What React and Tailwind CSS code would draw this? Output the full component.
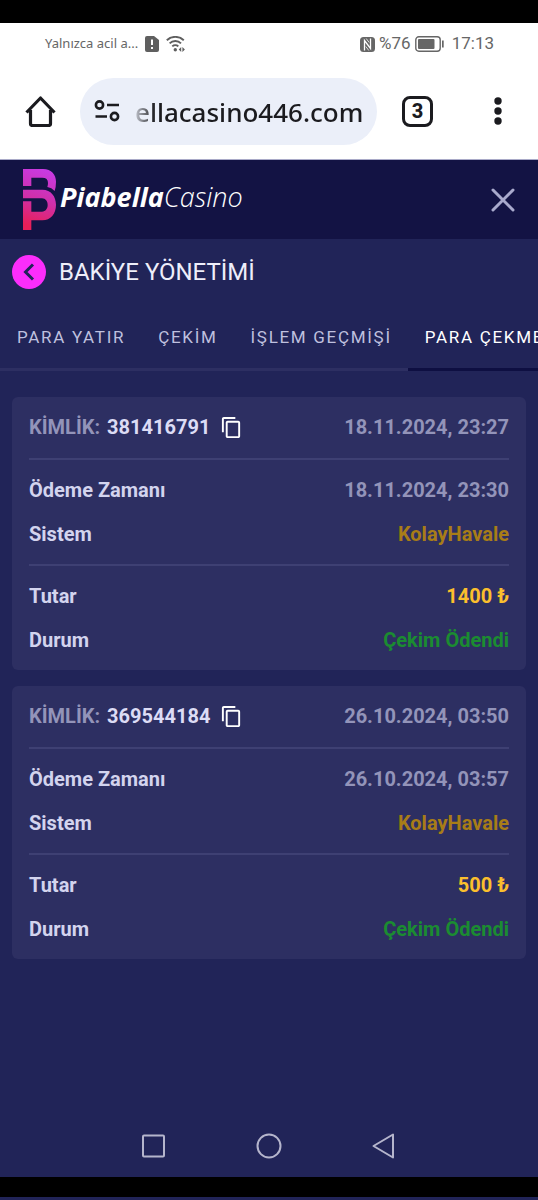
import React from "react";
import { MdContentCopy } from "react-icons/md";

const tabs = ["PARA YATIR", "ÇEKİM", "İŞLEM GEÇMİŞİ", "PARA ÇEKME"];

const withdrawals = [
  { id: "381416791", created: "18.11.2024, 23:27", paid: "18.11.2024, 23:30", system: "KolayHavale", amount: "1400 ₺", status: "Çekim Ödendi" },
  { id: "369544184", created: "26.10.2024, 03:50", paid: "26.10.2024, 03:57", system: "KolayHavale", amount: "500 ₺", status: "Çekim Ödendi" },
];

function StatusBar() {
  return (
    <div className="flex h-[42px] items-center justify-between pl-[45px] pr-11 text-[#666] font-['Noto_Sans',sans-serif]">
      <div className="flex items-center gap-[7px]">
        <span className="text-[13px]">Yalnızca acil a...</span>
        <svg className="h-4 w-[14px]" viewBox="0 0 14 16" aria-hidden="true">
          <path d="M2 0h7l5 4v10a2 2 0 0 1-2 2H2a2 2 0 0 1-2-2V2a2 2 0 0 1 2-2z" fill="#5f5f5f" />
          <path d="M7 3.500v5.500M7 11v2" stroke="#fff" strokeWidth="2" />
        </svg>
        <svg className="h-4 w-5" viewBox="0 0 20 16" fill="none" stroke="#5f5f5f" strokeWidth="1.900" aria-hidden="true">
          <path d="M.8 4.200a12.500 12.500 0 0 1 17 0M3.600 7.400a8 8 0 0 1 11.400 0M6.300 10.400a4.300 4.300 0 0 1 6 0" />
          <circle cx="9.300" cy="13.700" r="1.700" fill="#5f5f5f" stroke="none" />
          <path d="M15.200 11l-2.500 2.500 2.500 2.500zM16.400 11l2.500 2.500-2.500 2.500z" fill="#5f5f5f" stroke="none" />
        </svg>
      </div>
      <div className="flex items-center gap-1 font-['Roboto',sans-serif]">
        <svg className="h-[15px] w-[15px]" viewBox="0 0 15 15" aria-hidden="true">
          <rect width="15" height="15" rx="3.500" fill="#666" />
          <path d="M4.500 13.500V3.500l6 8V1.500" fill="none" stroke="#fff" strokeWidth="1.300" />
          <path d="M6.200 1.500l3 4M5.800 9.500l3 4" fill="none" stroke="#fff" strokeWidth="0.800" />
        </svg>
        <span className="text-[17px]">%76</span>
        <svg className="h-4 w-[29px]" viewBox="0 0 29 16" aria-hidden="true">
          <rect x=".8" y=".8" width="24.400" height="14.400" rx="3" fill="none" stroke="#666" strokeWidth="1.400" />
          <rect x="3" y="3" width="16.500" height="10" rx="1" fill="#666" />
          <rect x="27" y="4.500" width="1.700" height="7" fill="#666" />
        </svg>
        <span className="pl-1 text-[17px]">17:13</span>
      </div>
    </div>
  );
}

function BrowserBar() {
  return (
    <div className="flex h-[95px] items-center border-b border-[#a9aac8] pb-[2px] pl-6 pr-9">
      <button aria-label="Ana sayfa">
        <svg className="h-8 w-8" viewBox="0 0 32 32" fill="none" stroke="#1b1b1f" strokeWidth="3.200" aria-hidden="true">
          <path d="M2.500 17.500L16.500 3l14 14.500M6.500 15v13.500q0 2 2 2h16q2 0 2-2V15" strokeLinejoin="round" />
        </svg>
      </button>
      <div className="ml-6 flex h-[67px] min-w-0 flex-1 items-center rounded-full bg-[#ebeff9] pl-[14px] pr-2">
        <svg className="h-6 w-[26px] shrink-0" viewBox="0 0 26 24" fill="none" stroke="#1b1b1f" strokeWidth="2.600" aria-hidden="true">
          <circle cx="5.500" cy="6" r="3.600" />
          <path d="M13 6h12M1.500 17.500H13" />
          <circle cx="20.500" cy="17.500" r="3.600" />
        </svg>
        <input
          aria-label="Adres"
          defaultValue="ellacasino446.com"
          className="ml-[15px] w-full min-w-0 bg-transparent pt-[3px] text-[26px] font-medium text-[#1b1b1f] outline-none [mask-image:linear-gradient(to_right,rgba(0,0,0,0.2),black_20px)] font-['Noto_Sans',sans-serif]"
        />
      </div>
      <button aria-label="Sekmeler" className="ml-[25px] flex h-[31px] w-[31px] items-center justify-center rounded-lg border-3 border-[#1b1b1f] text-[20px] font-extrabold text-[#1b1b1f]">
        3
      </button>
      <button aria-label="Menü" className="ml-[61px] flex">
        <svg className="h-7 w-2" viewBox="0 0 8 28" fill="#1b1b1f" aria-hidden="true">
          <circle cx="4" cy="4" r="3.700" />
          <circle cx="4" cy="14" r="3.700" />
          <circle cx="4" cy="24" r="3.700" />
        </svg>
      </button>
    </div>
  );
}

function Logo() {
  return (
    <a href="#" className="flex items-center gap-1">
      <svg className="h-[61px] w-[33px]" viewBox="0 0 99 183" fill="none" aria-hidden="true">
        <defs>
          <linearGradient id="mark" gradientUnits="userSpaceOnUse" x1="75" y1="0" x2="20" y2="170">
            <stop offset="0" stopColor="#c83be6" />
            <stop offset="0.550" stopColor="#cf2fa8" />
            <stop offset="1" stopColor="#e81f58" />
          </linearGradient>
        </defs>
        <path d="M0 0H60C86 0 99 18 99 38Q99 54 95 66Q86 56 73 54Q75 48 75 42Q75 26 58 26H25V51H0Z" fill="url(#mark)" />
        <path d="M0 62H58C84 62 99 82 99 107C99 134 83 154 58 154H25V183H0V97H25V128H57C68 128 74 118 74 108C74 97 68 88 57 88H0Z" fill="url(#mark)" />
      </svg>
      <span className="pb-1 text-[27px] italic text-white font-['Open_Sans',sans-serif]">
        <span className="font-bold">Piabella</span>
        <span className="font-light">Casino</span>
      </span>
    </a>
  );
}

function Row({ label, value, tone }) {
  return (
    <div className="flex h-11 items-center justify-between">
      <dt className="text-[#d3d4ee]">{label}</dt>
      <dd className={tone}>{value}</dd>
    </div>
  );
}

function WithdrawalCard({ item }) {
  return (
    <article className="rounded-md bg-[#2d2f62] px-[17px] text-[20px] font-bold">
      <header className="flex items-center justify-between border-b-2 border-[#3e4073] pb-[9px] pt-2">
        <div className="flex h-11 items-center">
          <span className="text-[#9394b9]">KİMLİK:</span>
          <span className="ml-[7px] text-[#dcdcf5]">{item.id}</span>
          <button aria-label="Kimliği kopyala" className="ml-[10px]">
            <MdContentCopy className="h-[23px] w-[23px] text-white" />
          </button>
        </div>
        <time className="text-[#9394b9]">{item.created}</time>
      </header>
      <dl className="border-b-2 border-[#3e4073] py-2">
        <Row label="Ödeme Zamanı" value={item.paid} tone="text-[#9394b9]" />
        <Row label="Sistem" value={item.system} tone="text-[#a87d17]" />
      </dl>
      <dl className="py-2">
        <Row label="Tutar" value={item.amount} tone="text-[#fbbf2d]" />
        <Row label="Durum" value={item.status} tone="text-[#1b8c31]" />
      </dl>
    </article>
  );
}

export default function App() {
  return (
    <div className="flex min-h-screen flex-col bg-[#212458] font-['Roboto',sans-serif]">
      <div className="h-[23px] bg-black" />
      <div className="bg-white">
        <StatusBar />
        <BrowserBar />
      </div>
      <header className="flex h-[79px] items-center justify-between bg-[#131344] px-[23px]">
        <Logo />
        <button aria-label="Kapat">
          <svg className="h-6 w-6" viewBox="0 0 24 24" stroke="#a9aacd" strokeWidth="3" strokeLinecap="round" aria-hidden="true">
            <path d="M2 2l20 20M22 2L2 22" />
          </svg>
        </button>
      </header>
      <main className="flex-1">
        <div className="flex h-[66px] items-center gap-[13px] px-3">
          <button aria-label="Geri" className="flex h-[34px] w-[34px] items-center justify-center rounded-full bg-[#fb2dfb]">
            <svg className="h-[18px] w-3" viewBox="0 0 12 18" fill="none" stroke="#212458" strokeWidth="3" aria-hidden="true">
              <path d="M10 1.500L2.500 9l7.500 7.500" />
            </svg>
          </button>
          <h1 className="text-[24px] text-[#eeeefa]">BAKİYE YÖNETİMİ</h1>
        </div>
        <div role="tablist" className="flex overflow-hidden">
          {tabs.map((tab, i) => (
            <button
              key={tab}
              role="tab"
              aria-selected={i === 3}
              className={
                i === 3
                  ? "h-[66px] shrink-0 border-b-3 border-[#0e0f42] pl-[17px] pr-4 pt-[2px] text-[17px] tracking-widest text-white"
                  : "h-[66px] shrink-0 border-b-3 border-[#2d2f62] pl-[17px] pr-4 pt-[2px] text-[17px] tracking-widest text-[#bfc0df]"
              }
            >
              {tab}
            </button>
          ))}
        </div>
        <div className="flex flex-col gap-4 px-3 pt-[26px]">
          {withdrawals.map((item) => (
            <WithdrawalCard key={item.id} item={item} />
          ))}
        </div>
      </main>
      <nav className="flex h-[63px] items-center justify-center gap-[90px]">
        <button aria-label="Son uygulamalar">
          <svg className="h-[26px] w-[26px]" viewBox="0 0 26 26" fill="none" stroke="#b5b5cc" strokeWidth="2" aria-hidden="true">
            <rect x="3" y="2.500" width="21" height="21" rx="1" />
          </svg>
        </button>
        <button aria-label="Ana ekran">
          <svg className="h-[26px] w-[26px]" viewBox="0 0 26 26" fill="none" stroke="#b5b5cc" strokeWidth="2" aria-hidden="true">
            <circle cx="13" cy="13" r="11.500" />
          </svg>
        </button>
        <button aria-label="Geri dön">
          <svg className="h-[26px] w-[26px]" viewBox="0 0 26 26" fill="none" stroke="#b5b5cc" strokeWidth="2" strokeLinejoin="round" aria-hidden="true">
            <path d="M21 1.500v23L1.500 13z" />
          </svg>
        </button>
      </nav>
      <div className="h-5 bg-black" />
      <div className="h-[3px] bg-[#212458]" />
    </div>
  );
}
